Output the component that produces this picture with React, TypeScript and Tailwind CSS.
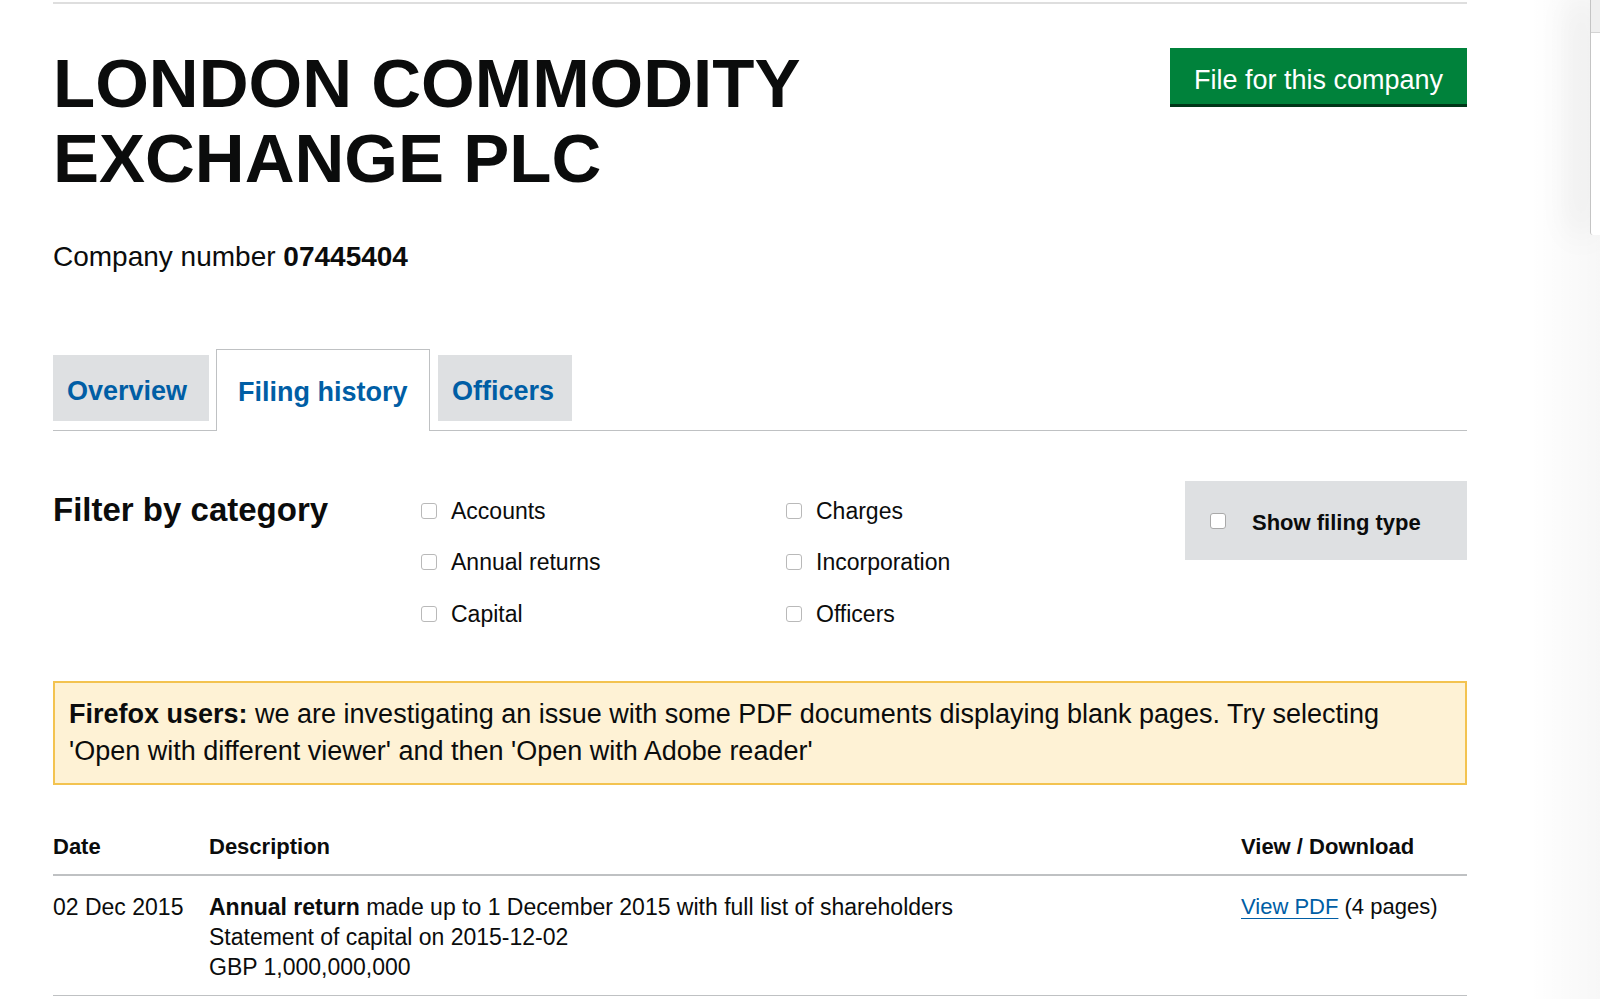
import React from 'react'

const leftCategories = ['Accounts', 'Annual returns', 'Capital']
const rightCategories = ['Charges', 'Incorporation', 'Officers']

function Box({ big }: { big?: boolean }) {
  return (
    <span
      className={
        big
          ? 'block w-[16px] h-[16px] rounded-[3px] border border-[#a9a9a9] bg-white shrink-0'
          : 'block w-[16px] h-[16px] rounded-[3px] border border-[#b9b9b9] bg-white shrink-0'
      }
    />
  )
}

function CategoryColumn({ items, width }: { items: string[]; width: string }) {
  return (
    <div className={`${width} mt-[4px] flex flex-col`}>
      {items.map((label) => (
        <label key={label} className="h-[51.5px] flex items-center gap-[14px] text-[23px] text-[#0b0c0c]">
          <Box />
          <span>{label}</span>
        </label>
      ))}
    </div>
  )
}

export default function App() {
  return (
    <div
      className="relative min-h-[999px] bg-white overflow-hidden text-[#0b0c0c]"
      style={{ fontFamily: '"Liberation Sans", Arial, sans-serif' }}
    >
      <div className="ml-[53px] w-[1414px]">
        <div className="mt-[2px] h-[2px] bg-[#dedede]" />

        {/* heading */}
        <div className="mt-[42px] flex justify-between items-start">
          <h1 className="text-[69px] leading-[75px] font-bold">
            LONDON COMMODITY
            <br />
            EXCHANGE PLC
          </h1>
          <button className="mt-[2px] w-[297px] h-[56px] pt-[8px] bg-[#00823b] shadow-[0_3px_0_#003618] text-white text-[27px] leading-[48px]">
            File for this company
          </button>
        </div>

        <p className="mt-[43px] text-[28px] leading-[36px]">
          Company number <strong className="font-bold">07445404</strong>
        </p>

        {/* tabs */}
        <div className="mt-[74px] flex items-end border-b border-[#bfc1c3]">
          <a className="w-[156px] h-[66px] mb-[9px] bg-[#dee0e2] pl-[14px] pt-[23px] text-[27px] leading-[27px] font-bold text-[#005ea5]">
            Overview
          </a>
          <a className="ml-[7px] w-[214px] h-[82px] -mb-px bg-white border border-b-0 border-[#bfc1c3] pl-[21px] pt-[29px] text-[27px] leading-[27px] font-bold text-[#005ea5]">
            Filing history
          </a>
          <a className="ml-[8px] w-[134px] h-[66px] mb-[9px] bg-[#dee0e2] pl-[14px] pt-[23px] text-[27px] leading-[27px] font-bold text-[#005ea5]">
            Officers
          </a>
        </div>

        {/* filters */}
        <div className="mt-[50px] flex items-start">
          <h2 className="w-[368px] mt-[9px] text-[33px] leading-[40px] font-bold">Filter by category</h2>
          <CategoryColumn items={leftCategories} width="w-[365px]" />
          <CategoryColumn items={rightCategories} width="w-[399px]" />
          <div className="w-[282px] h-[79px] bg-[#dee0e2] flex items-center pl-[25px] gap-[26px]">
            <Box big />
            <span className="mt-[3px] text-[22px] font-bold">Show filing type</span>
          </div>
        </div>

        {/* notice */}
        <div className="mt-[41px] border-2 border-[#f3c350] bg-[#fef2d5] px-[14px] py-[13px] text-[27px] leading-[37px]">
          <strong className="font-bold">Firefox users:</strong> we are investigating an issue with some PDF documents
          displaying blank pages. Try selecting
          <br />
          'Open with different viewer' and then 'Open with Adobe reader'
        </div>

        {/* table */}
        <div className="mt-[47px] grid grid-cols-[156px_1fr_226px] pb-[12px] border-b-2 border-[#bfc1c3] text-[22px] leading-[30px] font-bold">
          <div>Date</div>
          <div>Description</div>
          <div>View / Download</div>
        </div>
        <div className="grid grid-cols-[156px_1fr_226px] pt-[16px] pb-[13px] border-b border-[#bfc1c3] text-[23px] leading-[30px]">
          <div>02 Dec 2015</div>
          <div>
            <div>
              <strong className="font-bold">Annual return</strong> made up to 1 December 2015 with full list of
              shareholders
            </div>
            <div>Statement of capital on 2015-12-02</div>
            <div>GBP 1,000,000,000</div>
          </div>
          <div className="text-[22px]">
            <a className="text-[#005ea5] underline underline-offset-[4px] decoration-1">View PDF</a> (4 pages)
          </div>
        </div>
      </div>

      {/* window edge on the right */}
      <div className="absolute top-0 right-0 h-full w-[70px] bg-gradient-to-l from-[rgba(0,0,0,0.03)] to-transparent" />
      <div className="absolute top-0 right-0 w-[10px] h-[235px] bg-white border-l border-[#c4c4c4] rounded-bl-[3px] shadow-[-14px_0_34px_rgba(0,0,0,0.13)]">
        <div className="h-[33px] bg-[#efefef] border-b border-[#d4d4d4]" />
      </div>
    </div>
  )
}
